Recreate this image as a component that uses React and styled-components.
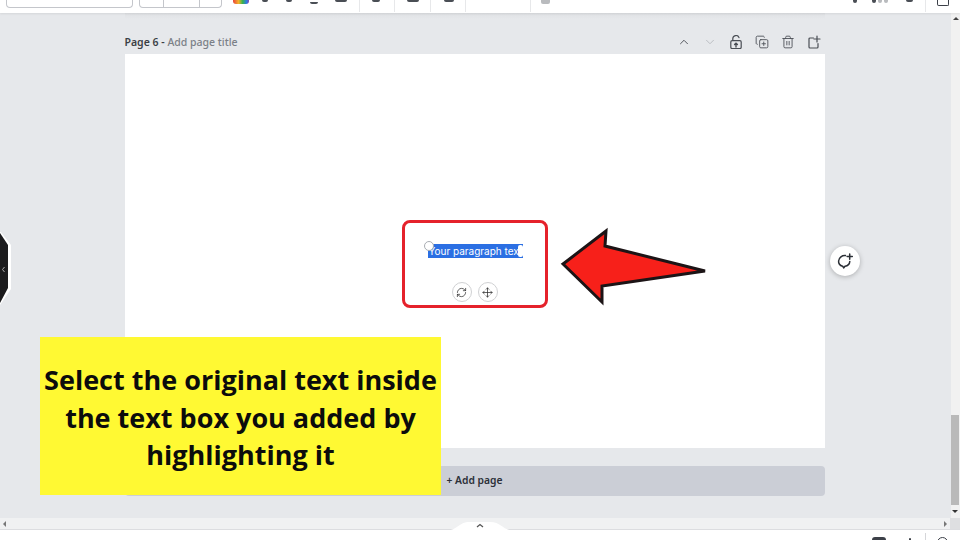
import React from "react";
import styled, { createGlobalStyle } from "styled-components";
import { ChevronUp, ChevronDown, CopyPlus, Trash2, RefreshCw, Move } from "lucide-react";

const Global = createGlobalStyle`
  html, body { margin: 0; padding: 0; width: 960px; height: 540px; overflow: hidden; background: #fff; }
  * { box-sizing: border-box; }
`;

const Screen = styled.div`
  position: relative;
  width: 960px;
  height: 540px;
  display: flex;
  flex-direction: column;
  overflow: hidden;
  font-family: "Noto Sans", sans-serif;
  background: #fff;
`;

const Toolbar = styled.header`
  height: 13px;
  flex: none;
  background: #fff;
  display: flex;
  align-items: flex-start;
  padding-left: 6px;
  overflow: hidden;
  box-shadow: 0 1px 2px rgba(0, 0, 0, 0.08);
  position: relative;
  z-index: 2;
`;

const FontBox = styled.div`
  width: 127px;
  height: 8px;
  border: 1px solid #c4c6cb;
  border-top: none;
  border-radius: 0 0 4px 4px;
`;

const SizeBox = styled.div`
  width: 83px;
  height: 8px;
  margin-left: 6px;
  border: 1px solid #c4c6cb;
  border-top: none;
  border-radius: 0 0 4px 4px;
  display: grid;
  grid-template-columns: 23px 36px 1fr;
`;

const SizeCell = styled.span`
  border-left: ${(p) => (p.$first ? "none" : "1px solid #c4c6cb")};
`;

const Rainbow = styled.span`
  width: 16px;
  height: 4px;
  margin-left: 11px;
  background: linear-gradient(90deg, #e8413a, #f3b32a 35%, #37b24d 60%, #2c7be5 85%, #8e44ad);
  border-radius: 0 0 3px 3px;
  filter: blur(0.4px);
`;

const Stub = styled.span`
  width: ${(p) => p.$w}px;
  height: ${(p) => p.$h || 2}px;
  margin-left: ${(p) => p.$ml || 0}px;
  margin-top: ${(p) => p.$mt || 0}px;
  background: ${(p) => p.$c || "#4a4e55"};
  border-radius: 0 0 2px 2px;
  flex: none;
  filter: blur(0.5px);
`;

const Rule = styled.span`
  width: 1px;
  height: 12px;
  margin-left: ${(p) => p.$ml}px;
  background: #e7e8ea;
  flex: none;
`;

const ToolSpacer = styled.span`
  flex: 1;
`;

const BoxStub = styled.span`
  width: 12px;
  height: 6px;
  margin-left: 11px;
  margin-right: 11px;
  border: 1.5px solid #3c4048;
  border-top: none;
  border-radius: 0 0 2px 2px;
  flex: none;
  filter: blur(0.3px);
`;

const Middle = styled.div`
  flex: 1;
  min-height: 0;
  display: flex;
`;

const Workspace = styled.main`
  flex: 1;
  background: #e6e8eb;
  display: flex;
  justify-content: center;
  padding-right: 1px;
`;

const Column = styled.section`
  width: 700px;
  margin-left: -1px;
  padding-top: 17px;
  background: linear-gradient(#dfe1e4, #e6e8eb 6px);
  display: flex;
  flex-direction: column;
  align-self: flex-start;
`;

const PageHeader = styled.div`
  height: 24px;
  display: flex;
  align-items: center;
  justify-content: space-between;
  padding-right: 4px;
`;

const PageTitle = styled.div`
  font-size: 10.5px;
  font-weight: 600;
  color: #3b3f46;
`;

const Muted = styled.span`
  color: #7b8087;
  font-weight: 500;
`;

const HeaderIcons = styled.div`
  display: flex;
  gap: 12px;
  color: #4a4e55;
`;

const IconSlot = styled.span`
  width: 14px;
  height: 14px;
  display: flex;
  color: ${(p) => p.$c || "inherit"};
`;

const Canvas = styled.div`
  position: relative;
  height: 394px;
  background: #fff;
`;

const AddPage = styled.div`
  margin-top: 18px;
  height: 30px;
  padding-bottom: 2px;
  border-radius: 4px;
  background: #cbced6;
  color: #2c3038;
  font-size: 10.3px;
  font-weight: 600;
  display: flex;
  align-items: center;
  justify-content: center;
`;

const RedFrame = styled.div`
  position: absolute;
  left: 277px;
  top: 166px;
  width: 146px;
  height: 88px;
  border: 3px solid #e5222b;
  border-radius: 8px;
`;

const Selection = styled.div`
  position: absolute;
  left: 23px;
  top: 21px;
  width: 95px;
  height: 14px;
  background: #2b6fe3;
  color: #fff;
  font-family: Inter, sans-serif;
  font-size: 10px;
  line-height: 14px;
  white-space: nowrap;
  overflow: hidden;
  padding-left: 1px;
`;

const Caret = styled.span`
  position: absolute;
  right: 0;
  top: 1px;
  width: 5px;
  height: 12px;
  background: #fff;
  border-radius: 2px;
`;

const StartHandle = styled.span`
  position: absolute;
  left: 19px;
  top: 18px;
  width: 10px;
  height: 10px;
  border-radius: 50%;
  background: #fff;
  border: 1px solid #a9adb3;
`;

const Controls = styled.div`
  position: absolute;
  left: 47px;
  top: 59px;
  display: flex;
  gap: 6px;
`;

const RoundControl = styled.span`
  width: 20px;
  height: 20px;
  border-radius: 50%;
  background: #fff;
  border: 1.5px solid #d0d1d3;
  color: #2a2a2a;
  display: flex;
  align-items: center;
  justify-content: center;
`;

const ArrowArt = styled.svg`
  position: absolute;
  left: 425px;
  top: 165px;
`;

const VScroll = styled.aside`
  width: 9px;
  flex: none;
  background: #f1f1f1;
  display: flex;
  flex-direction: column;
  align-items: center;
  padding-top: 4px;
  font-size: 0;
`;

const ThumbV = styled.div`
  width: 8px;
  height: 90px;
  margin-top: auto;
  margin-bottom: 13px;
  align-self: flex-start;
  background: #b9b9b9;
`;

const TriUp = styled.span`
  width: 0;
  height: 0;
  border: 3px solid transparent;
  border-top: none;
  border-bottom: 3px solid #444;
`;

const TriDown = styled.span`
  position: absolute;
  right: 2px;
  bottom: 27px;
  width: 0;
  height: 0;
  border: 3px solid transparent;
  border-bottom: none;
  border-top: 3px solid #333;
`;

const HScroll = styled.div`
  height: 12px;
  flex: none;
  background: #f0f1f2;
  display: flex;
  align-items: center;
  padding-left: 3px;
  border-bottom: 1px solid #dcdde0;
  position: relative;
`;

const TriSide = styled.span`
  width: 0;
  height: 0;
  border: 3px solid transparent;
  ${(p) =>
    p.$left
      ? "border-left: none; border-right: 3px solid #777;"
      : "border-right: none; border-left: 3px solid #777; margin-left: auto; margin-right: 13px;"}
`;

const Corner = styled.span`
  position: absolute;
  right: 0;
  top: 0;
  bottom: 0;
  width: 10px;
  background: #dedfe1;
`;

const Notch = styled.svg`
  position: absolute;
  left: 446px;
  top: 521px;
  z-index: 3;
`;

const BottomBar = styled.footer`
  height: 10px;
  flex: none;
  background: #fff;
  display: flex;
  align-items: flex-start;
  justify-content: flex-end;
  overflow: hidden;
  padding-right: 12px;
`;

const BottomRule = styled.span`
  width: 1px;
  height: 7px;
  margin: 3px 11px 0 14px;
  background: #d5d6d9;
`;

const BottomDark = styled.span`
  width: ${(p) => p.$w}px;
  height: ${(p) => p.$h}px;
  margin-top: ${(p) => p.$mt || 0}px;
  margin-right: ${(p) => p.$mr || 0}px;
  background: #3c4048;
  border-radius: 3px 3px 0 0;
  filter: blur(0.4px);
`;

const BottomArc = styled.span`
  width: 11px;
  height: 11px;
  flex: none;
  margin-top: 7px;
  border: 1.5px solid #3c4048;
  border-radius: 50%;
`;

const Callout = styled.div`
  position: absolute;
  left: 40px;
  top: 337px;
  width: 401px;
  height: 158px;
  background: #fff933;
  color: #0c0c0c;
  font-family: "Open Sans", sans-serif;
  font-weight: 700;
  font-size: 27px;
  line-height: 37.5px;
  text-align: center;
  padding-top: 24px;
  white-space: nowrap;
  z-index: 4;
`;

const SideTab = styled.svg`
  position: absolute;
  left: 0;
  top: 232px;
  z-index: 3;
`;

const CommentFab = styled.button`
  position: absolute;
  left: 830px;
  top: 246px;
  width: 30px;
  height: 30px;
  padding: 0;
  border: none;
  border-radius: 50%;
  background: #fff;
  box-shadow: 0 1px 5px rgba(0, 0, 0, 0.25);
  display: flex;
  align-items: center;
  justify-content: center;
  color: #2b2f36;
  z-index: 3;
`;

const LockIcon = () => (
  <svg width="14" height="14" viewBox="0 0 14 14" fill="none" stroke="currentColor" strokeWidth="1.2" strokeLinecap="round">
    <rect x="1.8" y="5.6" width="10.4" height="8" rx="1.3" />
    <path d="M3.8 5.4V3.6a3.2 3.2 0 0 1 6.2-1" />
    <path d="M7 12V8.2M5.6 9.6 7 8.2l1.4 1.4" strokeWidth="1.4" />
  </svg>
);

const AddIcon = () => (
  <svg width="14" height="14" viewBox="0 0 14 14" fill="none" stroke="currentColor" strokeWidth="1.2" strokeLinecap="round">
    <path d="M6.5 3H3a1 1 0 0 0-1 1v8a1 1 0 0 0 1 1h7a1 1 0 0 0 1-1V8.5" />
    <path d="M10 1v6M7 4h6" />
  </svg>
);

const CommentIcon = () => (
  <svg width="20" height="20" viewBox="0 0 20 20" fill="none" stroke="currentColor" strokeWidth="1.5" strokeLinecap="round">
    <path d="M10.5 4.6A6.2 6.2 0 0 0 3.6 10c-.2 2.7 1.6 4.6 4 5.2l1.2 1.6 1.2-1.6c2.6-.3 4.6-2.2 4.8-4.8" />
    <path d="M14.7 3v5.2M12.1 5.6h5.2" />
  </svg>
);

export default function App() {
  return (
    <Screen>
      <Global />
      <Toolbar>
        <FontBox />
        <SizeBox>
          <SizeCell $first />
          <SizeCell />
          <SizeCell />
        </SizeBox>
        <Rainbow />
        <Stub $w={6} $ml={13} />
        <Stub $w={6} $ml={18} />
        <Stub $w={8} $ml={18} $h={1.5} $mt={2} />
        <Stub $w={12} $ml={17} />
        <Rule $ml={12} />
        <Stub $w={8} $ml={12} />
        <Rule $ml={14} />
        <Stub $w={12} $ml={12} />
        <Rule $ml={11} />
        <Stub $w={10} $ml={13} />
        <Rule $ml={11} />
        <Rule $ml={64} />
        <Stub $w={9} $ml={10} $h={4} $c="#b9bbbe" />
        <ToolSpacer />
        <Stub $w={4} $h={3} />
        <Stub $w={4} $ml={15} $h={3} />
        <Stub $w={4} $ml={2} $h={3} $c="#b9bbbe" />
        <Stub $w={4} $ml={2} $h={3} $c="#b9bbbe" />
        <Stub $w={7} $ml={18} />
        <Rule $ml={12} />
        <BoxStub />
      </Toolbar>

      <Middle>
        <Workspace>
          <Column>
            <PageHeader>
              <PageTitle>
                Page 6 - <Muted>Add page title</Muted>
              </PageTitle>
              <HeaderIcons>
                <IconSlot><ChevronUp size={14} strokeWidth={1.6} /></IconSlot>
                <IconSlot $c="#b8bbbf"><ChevronDown size={14} strokeWidth={1.6} /></IconSlot>
                <IconSlot><LockIcon /></IconSlot>
                <IconSlot><CopyPlus size={14} strokeWidth={1.5} /></IconSlot>
                <IconSlot><Trash2 size={14} strokeWidth={1.5} /></IconSlot>
                <IconSlot><AddIcon /></IconSlot>
              </HeaderIcons>
            </PageHeader>
            <Canvas>
              <RedFrame>
                <Selection>
                  Your paragraph text
                  <Caret />
                </Selection>
                <StartHandle />
                <Controls>
                  <RoundControl><RefreshCw size={11} strokeWidth={1.6} /></RoundControl>
                  <RoundControl><Move size={11} strokeWidth={1.6} /></RoundControl>
                </Controls>
              </RedFrame>
              <ArrowArt width="160" height="90" viewBox="0 0 160 90">
                <polygon
                  points="13,45 56,12 55,27 155,52 52,67 52,83"
                  fill="#f7201a"
                  stroke="#1c1416"
                  strokeWidth="3"
                  strokeLinejoin="miter"
                />
              </ArrowArt>
            </Canvas>
            <AddPage>+ Add page</AddPage>
          </Column>
        </Workspace>
        <VScroll>
          <TriUp />
          <ThumbV />
          <TriDown />
        </VScroll>
      </Middle>

      <HScroll>
        <TriSide $left />
        <TriSide />
        <Corner />
      </HScroll>
      <BottomBar>
        <BottomDark $w={14} $h={3} $mt={7} $mr={23} />
        <BottomDark $w={2} $h={2} $mt={8} />
        <BottomRule />
        <BottomArc />
      </BottomBar>

      <Notch width="68" height="10" viewBox="0 0 68 10">
        <path d="M0 9.5C12 9.5 12 1 24 1h20c12 0 12 8.5 24 8.5V10H0Z" fill="#fff" />
        <path d="M31 6l3-2.5L37 6" fill="none" stroke="#555" strokeWidth="1.3" />
      </Notch>

      <SideTab width="12" height="74" viewBox="0 0 12 74">
        <path d="M0 -1l11 14v44L0 73Z" fill="#fff" />
        <path d="M0 1l8 12v43L0 71Z" fill="#1b1b1d" />
        <path d="M4.5 35L2.5 37.5 4.5 40" fill="none" stroke="#aaa" strokeWidth="1" />
      </SideTab>

      <CommentFab aria-label="Add comment"><CommentIcon /></CommentFab>

      <Callout>
        Select the original text inside
        <br />
        the text box you added by
        <br />
        highlighting it
      </Callout>
    </Screen>
  );
}
